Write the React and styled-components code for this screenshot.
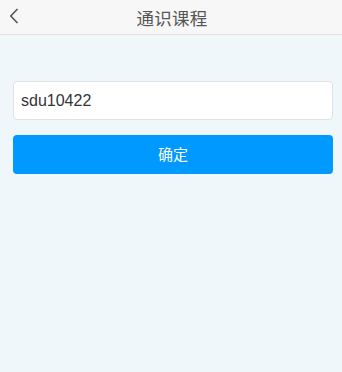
import React from "react";
import styled, { createGlobalStyle } from "styled-components";

const Global = createGlobalStyle`
  html, body { margin: 0; padding: 0; background: #f0f7fa; }
  body { font-family: "Liberation Sans", "Noto Sans CJK SC", sans-serif; }
  * { box-sizing: border-box; }
`;

const Page = styled.div`
  width: 342px;
  min-height: 372px;
  background: #f0f7fa;
`;

const Header = styled.header`
  height: 35px;
  background: #f7f7f7;
  border-bottom: 1px solid #e2e2e2;
  display: flex;
  align-items: center;
  justify-content: center;
  position: relative;
`;

const BackButton = styled.button`
  position: absolute;
  left: 8px;
  top: 8px;
  width: 12px;
  height: 16px;
  padding: 0;
  border: none;
  background: transparent;
  display: flex;
  align-items: center;
  justify-content: center;
`;

const Title = styled.h1`
  margin: 0;
  font-family: "Liberation Sans", "Noto Sans CJK SC", sans-serif;
  font-size: 17.5px;
  font-weight: normal;
  color: #555;
  letter-spacing: 0.3px;
  padding-left: 2px;
`;

const Form = styled.div`
  padding: 46px 9px 0 13px;
  display: flex;
  flex-direction: column;
  gap: 15px;
`;

const Input = styled.input`
  height: 39px;
  width: 100%;
  border: 1px solid #dfe3e8;
  border-radius: 4px;
  background: #fff;
  padding: 0 7px;
  font-family: "Liberation Sans", Arial, sans-serif;
  font-size: 16px;
  color: #333;
  outline: none;
`;

const Submit = styled.button`
  height: 39px;
  width: 100%;
  border: none;
  border-radius: 4px;
  background: #0099ff;
  color: #fff;
  font-family: "Liberation Sans", "Noto Sans CJK SC", sans-serif;
  font-size: 15px;
  padding: 0 0 2px;
`;

export default function App() {
  return (
    <Page>
      <Global />
      <Header>
        <BackButton aria-label="back">
          <svg width="12" height="16" viewBox="0 0 12 16">
            <path d="M9.5 1 L2.8 8 L9.5 15" fill="none" stroke="#555" strokeWidth="1.6" />
          </svg>
        </BackButton>
        <Title>通识课程</Title>
      </Header>
      <Form>
        <Input defaultValue="sdu10422" />
        <Submit>确定</Submit>
      </Form>
    </Page>
  );
}
